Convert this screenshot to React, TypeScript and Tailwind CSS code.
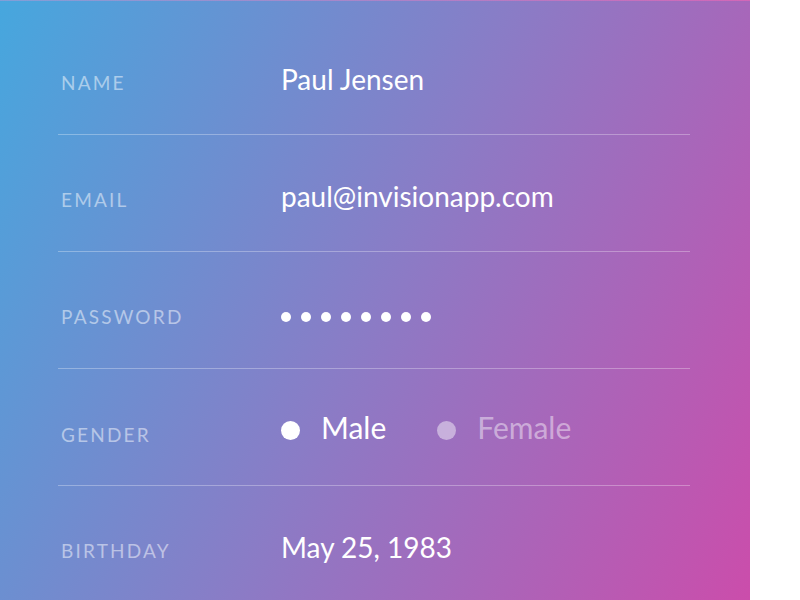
import React from 'react';

const font = { fontFamily: 'Lato, "Open Sans", sans-serif' };

const Row = ({
  label,
  children,
  last,
}: {
  label: string;
  children: React.ReactNode;
  last?: boolean;
}) => (
  <div
    className={`flex h-[117px] items-baseline pt-[45px] ${
      last ? '' : 'border-b border-white/30'
    }`}
  >
    <div className="w-[223px] shrink-0 pl-[3px] text-[19px] uppercase leading-[22px] tracking-[2.2px] text-white/50">
      {label}
    </div>
    <div className="text-[28px] leading-[32px] text-white">{children}</div>
  </div>
);

export default function App() {
  return (
    <div className="flex h-[600px] w-[800px] overflow-hidden bg-white" style={font}>
      <div className="h-full w-[750px] border-t border-white/15 bg-[linear-gradient(116deg,#46a7de_0%,#8a7cc6_50%,#cb4dab_100%)] pt-[17px]">
        <div className="ml-[58px] w-[632px]">
          <Row label="Name">Paul Jensen</Row>
          <Row label="Email">paul@invisionapp.com</Row>
          <Row label="Password">
            {Array.from({ length: 8 }).map((_, i) => (
              <span
                key={i}
                className="mr-[10.5px] inline-block h-[9.5px] w-[9.5px] rounded-full bg-white align-middle"
              />
            ))}
          </Row>
          <Row label="Gender">
            <span className="relative -top-[3px] text-[30px] leading-[32px]">
              <span className="relative -top-[1px] mr-[21px] inline-block h-[19px] w-[19px] rounded-full bg-white align-middle" />
              <span>Male</span>
              <span className="relative -top-[1px] ml-[51px] mr-[21px] inline-block h-[19px] w-[19px] rounded-full bg-white/45 align-middle" />
              <span className="text-white/45">Female</span>
            </span>
          </Row>
          <Row label="Birthday" last>
            May 25, 1983
          </Row>
        </div>
      </div>
    </div>
  );
}
